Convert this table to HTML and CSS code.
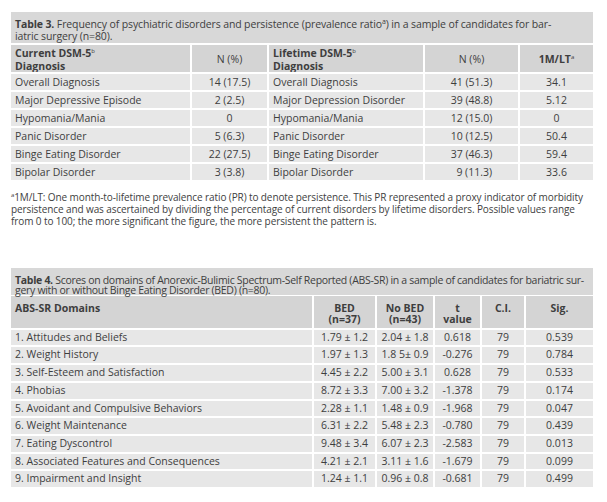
FILE: index.html
```html
<!DOCTYPE html>
<html>
<head>
<meta charset="utf-8">
<link rel="stylesheet" href="styles.css">
</head>
<body>
<div class="page">
  <div class="block t3">
    <div class="cap cap3"><b>Table 3.</b> Frequency of psychiatric disorders and persistence (prevalence ratio<sup class="capsup">a</sup>) in a sample of candidates for bar-<br>iatric surgery (n=80).</div>
    <table class="grid g3">
      <colgroup><col class="c31"><col class="c32"><col class="c33"><col class="c34"><col class="c35"></colgroup>
      <thead>
        <tr>
          <th class="l">Current DSM-5<sup>b</sup><br>Diagnosis</th>
          <th class="n">N (%)</th>
          <th class="l">Lifetime DSM-5<sup>b</sup><br>Diagnosis</th>
          <th class="n">N (%)</th>
          <th class="c">1M/LT<sup>a</sup></th>
        </tr>
      </thead>
      <tbody>
        <tr><td>Overall Diagnosis</td><td class="c">14 (17.5)</td><td>Overall Diagnosis</td><td class="c">41 (51.3)</td><td class="c">34.1</td></tr>
        <tr><td>Major Depressive Episode</td><td class="c">2 (2.5)</td><td>Major Depression Disorder</td><td class="c">39 (48.8)</td><td class="c">5.12</td></tr>
        <tr><td>Hypomania/Mania</td><td class="c">0</td><td>Hypomania/Mania</td><td class="c">12 (15.0)</td><td class="c">0</td></tr>
        <tr><td>Panic Disorder</td><td class="c">5 (6.3)</td><td>Panic Disorder</td><td class="c">10 (12.5)</td><td class="c">50.4</td></tr>
        <tr><td>Binge Eating Disorder</td><td class="c">22 (27.5)</td><td>Binge Eating Disorder</td><td class="c">37 (46.3)</td><td class="c">59.4</td></tr>
        <tr><td>Bipolar Disorder</td><td class="c">3 (3.8)</td><td>Bipolar Disorder</td><td class="c">&nbsp;&nbsp;9 (11.3)</td><td class="c">33.6</td></tr>
      </tbody>
    </table>
    <p class="note"><sup>a</sup>1M/LT: One month-to-lifetime prevalence ratio (PR) to denote persistence. This PR represented a proxy indicator of morbidity<br>persistence and was ascertained by dividing the percentage of current disorders by lifetime disorders. Possible values range<br>from 0 to 100; the more significant the figure, the more persistent the pattern is.</p>
  </div>

  <div class="block t4">
    <div class="cap cap4"><b>Table 4.</b> Scores on domains of Anorexic-Bulimic Spectrum-Self Reported (ABS-SR) in a sample of candidates for bariatric sur-<br>gery with or without Binge Eating Disorder (BED) (n=80).</div>
    <table class="grid g4">
      <colgroup><col class="c41"><col class="c42"><col class="c43"><col class="c44"><col class="c45"><col class="c46"></colgroup>
      <thead>
        <tr>
          <th class="l">ABS-SR Domains</th>
          <th class="c">BED<br>(n=37)</th>
          <th class="c">No BED<br>(n=43)</th>
          <th class="c">t<br>value</th>
          <th class="c">C.I.</th>
          <th class="c">Sig.</th>
        </tr>
      </thead>
      <tbody>
        <tr><td>1. Attitudes and Beliefs</td><td class="c">1.79 ± 1.2</td><td class="c">2.04 ± 1.8</td><td class="c">0.618</td><td class="c">79</td><td class="c">0.539</td></tr>
        <tr><td>2. Weight History</td><td class="c">1.97 ± 1.3</td><td class="c">1.8 5± 0.9</td><td class="c">-0.276</td><td class="c">79</td><td class="c">0.784</td></tr>
        <tr><td>3. Self-Esteem and Satisfaction</td><td class="c">4.45 ± 2.2</td><td class="c">5.00 ± 3.1</td><td class="c">0.628</td><td class="c">79</td><td class="c">0.533</td></tr>
        <tr><td>4. Phobias</td><td class="c">8.72 ± 3.3</td><td class="c">7.00 ± 3.2</td><td class="c">-1.378</td><td class="c">79</td><td class="c">0.174</td></tr>
        <tr><td>5. Avoidant and Compulsive Behaviors</td><td class="c">2.28 ± 1.1</td><td class="c">1.48 ± 0.9</td><td class="c">-1.968</td><td class="c">79</td><td class="c">0.047</td></tr>
        <tr><td>6. Weight Maintenance</td><td class="c">6.31 ± 2.2</td><td class="c">5.48 ± 2.3</td><td class="c">-0.780</td><td class="c">79</td><td class="c">0.439</td></tr>
        <tr><td>7. Eating Dyscontrol</td><td class="c">9.48 ± 3.4</td><td class="c">6.07 ± 2.3</td><td class="c">-2.583</td><td class="c">79</td><td class="c">0.013</td></tr>
        <tr><td>8. Associated Features and Consequences</td><td class="c">4.21 ± 2.1</td><td class="c">3.11 ± 1.6</td><td class="c">-1.679</td><td class="c">79</td><td class="c">0.099</td></tr>
        <tr><td>9. Impairment and Insight</td><td class="c">1.24 ± 1.1</td><td class="c">0.96 ± 0.8</td><td class="c">-0.681</td><td class="c">79</td><td class="c">0.499</td></tr>
      </tbody>
    </table>
  </div>
</div>
</body>
</html>
```

FILE: styles.css
```css
html, body {
  margin: 0;
  padding: 0;
  background: #ffffff;
}
body {
  font-family: "Open Sans", "Noto Sans", sans-serif;
  color: #3e3e3e;
  font-size: 10.5px;
}
.page {
  padding: 12px 14px 0 11px;
  display: flex;
  flex-direction: column;
}
.block {
  width: 582px;
}
.t4 {
  margin-top: 41px;
}
.cap {
  background: #d8d8d8;
  font-size: 10.5px;
  white-space: nowrap;
}
.cap3 {
  padding: 6px 4px 1px 4px;
  margin-bottom: 2px;
  line-height: 12px;
  letter-spacing: -0.12px;
}
.cap4 {
  padding: 7px 4px 0 4px;
  margin-bottom: 1px;
  line-height: 10px;
  letter-spacing: -0.3px;
}
.cap b {
  font-weight: 700;
}
.capsup {
  font-size: 7px;
  vertical-align: 4px;
  line-height: 0;
}
.grid {
  width: 582px;
  border-collapse: separate;
  border-spacing: 0;
  table-layout: fixed;
}
.grid th, .grid td {
  border-right: 2px solid #ffffff;
  border-bottom: 2px solid #ffffff;
  padding: 0 4px;
  white-space: nowrap;
  overflow: hidden;
}
.grid th:last-child, .grid td:last-child {
  border-right: none;
}
.grid th {
  background: #d4d4d4;
  font-weight: 700;
  text-align: left;
}
.grid td {
  background: #e7e7e7;
  font-weight: 400;
  text-align: left;
}
.grid .c, .grid .n {
  text-align: center;
}
.grid th.n {
  font-weight: 400;
}
.grid sup {
  font-size: 6px;
  vertical-align: 4px;
  line-height: 0;
  font-weight: 400;
}
.g3 thead th {
  line-height: 12.5px;
  padding-top: 2px;
  padding-bottom: 0;
  vertical-align: middle;
}
.g3 td {
  line-height: 16px;
}
.c31 { width: 181px; }
.c32 { width: 77px; }
.c33 { width: 156px; }
.c34 { width: 95px; }
.c35 { width: 73px; }

.note {
  margin: 9px 0 0 0;
  font-size: 10px;
  line-height: 12px;
  white-space: nowrap;
  letter-spacing: -0.1px;
}
.note sup {
  font-size: 6px;
  vertical-align: 4px;
  line-height: 0;
}

.g4 thead th {
  line-height: 11px;
  padding-top: 6.5px;
  padding-bottom: 3.2px;
  vertical-align: top;
}
.g4 td {
  line-height: 15.7px;
}
.c41 { width: 303px; }
.c42 { width: 63px; }
.c43 { width: 58px; }
.c44 { width: 47px; }
.c45 { width: 44px; }
.c46 { width: 67px; }
```
